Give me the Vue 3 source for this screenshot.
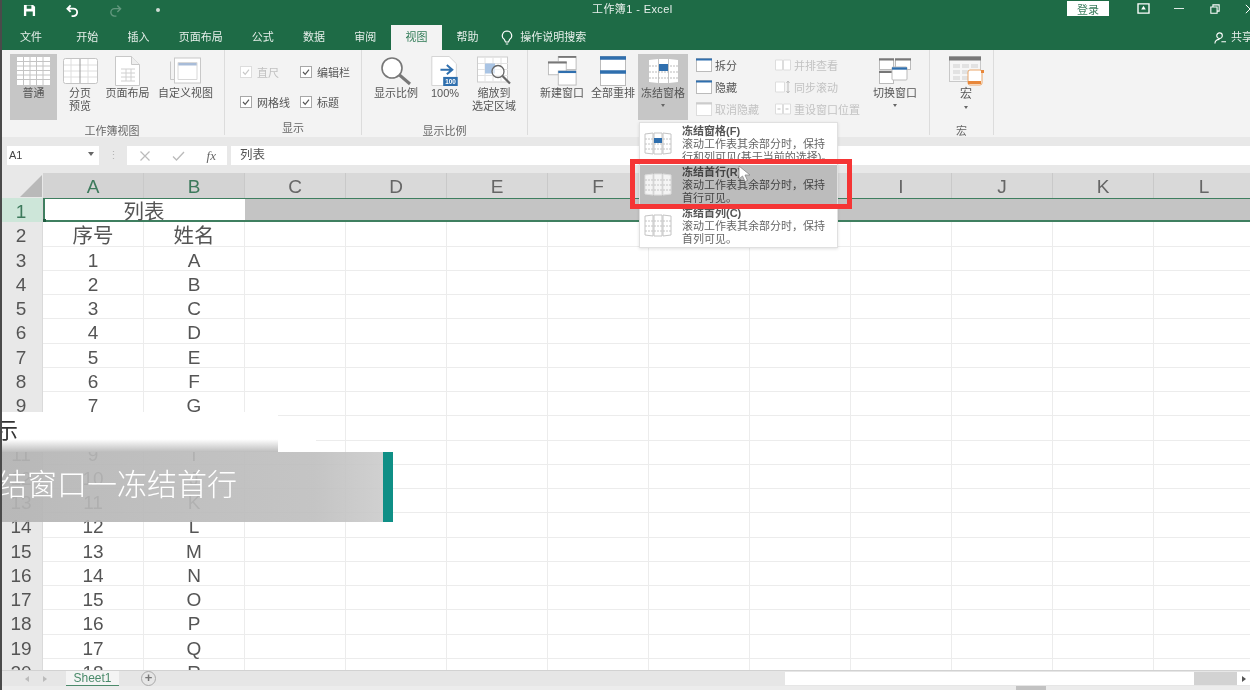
<template>
  <div class="excel">
    <!-- title bar -->
    <header class="titlebar">
      <div class="quick">
        <svg class="q-icon" viewBox="0 0 14 14"><path d="M1 1h10l2 2v10H1z" fill="#fff"/><path d="M4 1.500h5v3.500H4zM3.500 8h7v5h-7z" fill="#1f6c46"/></svg>
        <svg class="q-icon" viewBox="0 0 14 14"><path d="M5 1.500 1.500 5 5 8.500M2 5h6a4 4 0 0 1 0 8H6" fill="none" stroke="#fff" stroke-width="2"/></svg>
        <svg class="q-icon dim" viewBox="0 0 14 14"><path d="M9 1.500 12.500 5 9 8.500M12 5H6a4 4 0 0 0 0 8h2" fill="none" stroke="#fff" stroke-width="1.500"/></svg>
        <span class="q-dot"></span>
      </div>
      <div class="doc-title">工作簿1 - Excel</div>
      <div class="win">
        <button class="login" type="button">登录</button>
        <svg class="w-icon w-ribbon" viewBox="0 0 14 12"><path d="M1 1h12v10H1z" fill="none" stroke="#fff" stroke-width="1.500"/><path d="M7 3 4.500 7h5z" fill="#fff"/></svg>
        <span class="w-min"></span>
        <svg class="w-icon w-restore" viewBox="0 0 12 12"><path d="M1 3.500h7.500V11H1zM3.500 3.500V1H11v7.500H8.500" fill="none" stroke="#fff" stroke-width="1.300"/></svg>
        <svg class="w-icon w-close" viewBox="0 0 12 12"><path d="M1 1l10 10M11 1 1 11" stroke="#fff" stroke-width="1.200"/></svg>
      </div>
    </header>

    <!-- tabs -->
    <nav class="tabs">
      <span v-for="tab in tabs" :key="tab" :class="['tab', { active: tab === '视图' }]">{{ tab }}</span>
      <svg class="bulb" viewBox="0 0 12 15"><path d="M6 1a4.700 4.700 0 0 0-2.600 8.600L4.500 12h3l1.100-2.400A4.700 4.700 0 0 0 6 1zM4.800 14h2.400" fill="none" stroke="#fff" stroke-width="1.200"/></svg>
      <span class="search-hint">操作说明搜索</span>
      <span class="share">
        <svg viewBox="0 0 13 13"><circle cx="6" cy="4" r="3" fill="none" stroke="#fff" stroke-width="1.200"/><path d="M1 12.500c0-3 2-4.500 5-4.500M8 10.500h5" fill="none" stroke="#fff" stroke-width="1.200"/></svg>
        共享
      </span>
    </nav>

    <!-- ribbon -->
    <section class="ribbon">
      <div class="group g-views">
        <div class="group-body">
          <div class="big w47 selected">
            <svg class="ic" width="33" height="28" viewBox="0 0 33 28">
              <rect width="33" height="28" fill="#fff"/>
              <path d="M0 4.500h33M0 9h33M0 13.500h33M0 18h33M0 22.500h33M6.500 0v28M13 0v28M19.500 0v28M26 0v28" stroke="#c4c4c4"/>
            </svg>
            <span>普通</span>
          </div>
          <div class="big w40">
            <svg class="ic" width="35" height="26" viewBox="0 0 35 26">
              <rect x=".5" y=".5" width="34" height="25" rx="2" fill="#fff" stroke="#c4c4c4"/>
              <path d="M1 7h33M1 13h33M1 19h33M8 1v24M25 1v24" stroke="#dedede"/>
              <path d="M17 1v24" stroke="#9a9a9a"/>
            </svg>
            <span>分页<br />预览</span>
          </div>
          <div class="big w49">
            <svg class="ic" width="25" height="30" viewBox="0 0 25 30">
              <path d="M.5.500h16l8 8v21H.500z" fill="#fff" stroke="#c8c8c8"/>
              <path d="M16.500.5v8h8" fill="#eee" stroke="#c8c8c8"/>
              <path d="M6 13h14M6 17h14M6 21h14M6 25h14M11 13v12M16 13v12" stroke="#d0d0d0"/>
            </svg>
            <span>页面布局</span>
          </div>
          <div class="big w61">
            <svg class="ic" width="31" height="27" viewBox="0 0 31 27">
              <path d="M.5 4v18h4" fill="none" stroke="#c8c8c8"/>
              <rect x="4.500" y=".5" width="26" height="25" fill="#fff" stroke="#c8c8c8"/>
              <path d="M8 5h19v3H8z" fill="#a8bcd8"/>
              <path d="M8 5h19v17H8z" fill="none" stroke="#d8d8d8"/>
            </svg>
            <span>自定义视图</span>
          </div>
        </div>
        <div class="group-label">工作簿视图</div>
      </div>

      <div class="group g-show">
        <div class="group-body checks">
          <label v-for="c in checks" :key="c.text" :class="['check', { off: c.off }]">
            <svg width="12" height="12" viewBox="0 0 12 12">
              <rect x=".5" y=".5" width="11" height="11" fill="#fff" :stroke="c.off ? '#ddd' : '#a8a8a8'"/>
              <path d="M3 6l2.200 2.300L9 3.700" fill="none" :stroke="c.off ? '#c8c8c8' : '#555'" stroke-width="1.200"/>
            </svg>
            {{ c.text }}
          </label>
        </div>
        <div class="group-label">显示</div>
      </div>

      <div class="group g-zoom">
        <div class="group-body">
          <div class="big w46">
            <svg class="ic" width="32" height="30" viewBox="0 0 32 30">
              <circle cx="12" cy="12" r="10" fill="#fff" stroke="#777" stroke-width="1.600"/>
              <path d="M19.500 19 30 28" stroke="#777" stroke-width="3"/>
            </svg>
            <span>显示比例</span>
          </div>
          <div class="big w32 ml10">
            <svg class="ic" width="30" height="33" viewBox="0 0 30 33">
              <path d="M.5.500h19l8 8v24H.500z" fill="#fff" stroke="#cfcfcf"/>
              <path d="M10 15h12M17 10l6 5-6 5" fill="none" stroke="#2f6fae" stroke-width="2.200"/>
              <rect x="13" y="23" width="16" height="10" fill="#2f6fae"/>
              <text x="21" y="31" class="hundred">100</text>
            </svg>
            <span>100%</span>
          </div>
          <div class="big w54 ml6">
            <svg class="ic" width="34" height="29" viewBox="0 0 34 29">
              <rect x=".5" y=".5" width="30" height="25" fill="#fff" stroke="#cdcdcd"/>
              <path d="M1 7h30M1 13h30M1 19h30M8 1v24M16 1v24M24 1v24" stroke="#e2e2e2"/>
              <rect x="8" y="7" width="10" height="10" fill="#a9c4e4"/>
              <circle cx="21" cy="15" r="6" fill="#fff" fill-opacity=".6" stroke="#666" stroke-width="1.300"/>
              <path d="M25.500 19.500 33 27" stroke="#666" stroke-width="2.200"/>
            </svg>
            <span>缩放到<br />选定区域</span>
          </div>
        </div>
        <div class="group-label">显示比例</div>
      </div>

      <div class="group g-window">
        <div class="group-body">
          <div class="big w48">
            <svg class="ic" width="31" height="32" viewBox="0 0 31 32">
              <rect x="11" y=".5" width="19" height="14" fill="#fff" stroke="#bbb"/>
              <path d="M11 1h19" stroke="#777" stroke-width="2"/>
              <rect x=".5" y="6" width="19" height="14" fill="#fff" stroke="#bbb"/>
              <path d="M0 7h20" stroke="#777" stroke-width="2"/>
              <rect x="11" y="16" width="19" height="15" fill="#fff" stroke="#bbb"/>
              <path d="M11 17h19" stroke="#2f6fae" stroke-width="2.400"/>
            </svg>
            <span>新建窗口</span>
          </div>
          <div class="big w48 ml3">
            <svg class="ic" width="26" height="30" viewBox="0 0 26 30">
              <rect x=".5" y=".5" width="25" height="29" fill="#fff" stroke="#bbb"/>
              <path d="M0 2h26M0 16h26" stroke="#2f6fae" stroke-width="3.400"/>
            </svg>
            <span>全部重排</span>
          </div>
          <div class="big w50 ml1 selected">
            <svg class="ic" width="31" height="26" viewBox="0 0 31 26">
              <path d="M1 2l9-1 0 24-9-1zM11 1h9v24h-9zM21 1l9 1v22l-9 1z" fill="#fff"/>
              <path d="M1 8h29M1 14h29M1 20h29" stroke="#bbb" stroke-dasharray="2 1"/>
              <rect x="11" y="6" width="9" height="7" fill="#2f6fae"/>
            </svg>
            <span>冻结窗格</span>
            <i class="caret"></i>
          </div>
          <div class="small-col ml8 w78">
            <div class="small">
              <svg width="16" height="14" viewBox="0 0 16 14"><rect x=".5" y=".5" width="15" height="13" fill="#fff" stroke="#bbb"/><path d="M0 1.500h16" stroke="#2f6fae" stroke-width="2"/></svg>
              拆分
            </div>
            <div class="small">
              <svg width="16" height="14" viewBox="0 0 16 14"><rect x=".5" y=".5" width="15" height="13" fill="#fff" stroke="#bbb"/><path d="M0 1.500h16" stroke="#2f6fae" stroke-width="2"/></svg>
              隐藏
            </div>
            <div class="small off">
              <svg width="16" height="14" viewBox="0 0 16 14"><rect x=".5" y=".5" width="15" height="13" fill="#fff" stroke="#ddd"/><path d="M0 1.500h16" stroke="#ccc" stroke-width="2"/></svg>
              取消隐藏
            </div>
          </div>
          <div class="small-col ml1 w94">
            <div class="small off">
              <svg width="16" height="14" viewBox="0 0 16 14"><path d="M.5 2h7v10h-7zM8.500 2h7v10h-7z" fill="#fff" stroke="#ddd"/></svg>
              并排查看
            </div>
            <div class="small off">
              <svg width="16" height="14" viewBox="0 0 16 14"><path d="M.5 2h9v10h-9z" fill="#fff" stroke="#ddd"/><path d="M13 1v12M11.500 3 13 1l1.500 2M11.500 11l1.500 2 1.500-2" fill="none" stroke="#bbb"/></svg>
              同步滚动
            </div>
            <div class="small off">
              <svg width="16" height="14" viewBox="0 0 16 14"><path d="M.5 2h7v10h-7zM8.500 2h7v10h-7z" fill="#fff" stroke="#ddd"/><path d="M2.500 7h3M10.500 7h3" stroke="#bbb"/></svg>
              重设窗口位置
            </div>
          </div>
          <div class="big w48 ml2">
            <svg class="ic" width="32" height="26" viewBox="0 0 32 26">
              <rect x=".5" y=".5" width="14" height="11" fill="#fff" stroke="#bbb"/>
              <rect x="16.500" y=".5" width="15" height="11" fill="#fff" stroke="#bbb"/>
              <path d="M0 1.500h15M16 1.500h16" stroke="#777" stroke-width="2"/>
              <rect x=".5" y="13" width="14" height="12.500" fill="#fff" stroke="#bbb"/>
              <path d="M0 14h15" stroke="#777" stroke-width="2"/>
              <rect x="13" y="9" width="15" height="13" rx="1" fill="#fff" stroke="#bbb"/>
              <path d="M13 10.500h15" stroke="#2f6fae" stroke-width="2.400"/>
            </svg>
            <span>切换窗口</span>
            <i class="caret"></i>
          </div>
        </div>
        <div class="group-label">&nbsp;</div>
      </div>

      <div class="group g-macro">
        <div class="group-body">
          <div class="big w40 ml11">
            <svg class="ic" width="35" height="30" viewBox="0 0 35 30">
              <rect x=".5" y=".5" width="31" height="25" fill="#f6f6f6" stroke="#c8c8c8"/>
              <path d="M0 2.500h32" stroke="#777" stroke-width="4"/>
              <path d="M4 8h7v4H4zM13 8h7v4h-7zM22 8h7v4h-7zM4 14h7v4H4zM13 14h7v4h-7zM4 20h7v4H4zM13 20h7v4h-7z" fill="#e2e2e2"/>
              <rect x="19" y="14" width="14" height="15" rx="2" fill="#fff" stroke="#e9a66b"/>
              <path d="M19 26.500h13" stroke="#e8873a" stroke-width="3"/>
              <rect x="32" y="14" width="3" height="3" fill="#e8873a"/>
            </svg>
            <span class="macro-name">宏</span>
            <i class="caret"></i>
          </div>
        </div>
        <div class="group-label">宏</div>
      </div>
    </section>

    <!-- formula bar -->
    <div class="formula-bar">
      <div class="name-box">A1<i class="caret dark"></i></div>
      <span class="grip">⋮</span>
      <div class="fx-box">
        <svg width="12" height="12" viewBox="0 0 12 12"><path d="M1.500 1.500l9 9M10.500 1.500l-9 9" stroke="#bbb" stroke-width="1.200"/></svg>
        <svg width="13" height="12" viewBox="0 0 13 12"><path d="M1 6.500 4.500 10 12 2" fill="none" stroke="#bbb" stroke-width="1.300"/></svg>
        <i class="fx">fx</i>
      </div>
      <div class="formula">列表</div>
    </div>

    <!-- sheet -->
    <div class="sheet">
      <div class="row head">
        <div class="corner"><i></i></div>
        <div v-for="col in columns" :key="col" :class="['col-head', { on: col === 'A' || col === 'B' }]">{{ col }}</div>
      </div>
      <div class="row selected-row">
        <div class="row-head on">1</div>
        <div class="merged">列表<i class="handle"></i></div>
        <div v-for="col in columns.slice(2)" :key="col" class="cell dark"></div>
      </div>
      <div class="row">
        <div class="row-head">2</div>
        <div class="cell cjk">序号</div>
        <div class="cell cjk">姓名</div>
        <div v-for="col in columns.slice(2)" :key="col" class="cell"></div>
      </div>
      <div v-for="item in rows" :key="item.no" class="row">
        <div class="row-head">{{ item.no + 2 }}</div>
        <div class="cell">{{ item.no }}</div>
        <div class="cell">{{ item.name }}</div>
        <div v-for="col in columns.slice(2)" :key="col" class="cell"></div>
      </div>
    </div>

    <!-- sheet tabs + scrollbar -->
    <footer class="sheet-bar">
      <span class="nav-arrows">
        <i class="tri left"></i>
        <i class="tri right"></i>
      </span>
      <span class="sheet-tab">Sheet1</span>
      <span class="add-sheet">+</span>
      <div class="hscroll">
        <div class="track"></div>
        <div class="thumb"></div>
        <div class="end"><i class="tri right dark"></i></div>
      </div>
    </footer>
    <div class="progress"><i></i></div>

    <!-- freeze menu -->
    <div class="menu">
      <div v-for="(m, i) in menu" :key="m.title" :class="['menu-item', { hover: i === 1 }]">
        <svg width="28" height="26" viewBox="0 0 28 26">
          <path d="M1 3l8-1v21l-8-1zM10 2h8v21h-8zM19 2l8 1v19l-8 1z" :fill="i === 1 ? '#f4f4f4' : '#fff'" :stroke="i === 1 ? '#ddd' : '#c4c4c4'"/>
          <path d="M1 8h26M1 13h26M1 18h26" stroke="#c4c4c4" stroke-dasharray="2 1"/>
          <rect v-if="i === 0" x="10" y="7" width="8" height="5" fill="#2f6fae"/>
        </svg>
        <div class="menu-text">
          <strong>{{ m.title }}</strong>
          <p>{{ m.desc }}</p>
        </div>
      </div>
    </div>
    <div class="red-box"></div>
    <svg class="cursor" width="14" height="18" viewBox="0 0 14 18"><path d="M1 1v13l3.500-3 2.500 5.500 2.500-1L7 10h5z" fill="#fff" stroke="#888" stroke-width=".8"/></svg>

    <!-- video caption -->
    <div class="caption">
      <div class="cap-top"><span>示</span></div>
      <div class="cap-band">
        <span>结窗口一冻结首行</span>
        <i></i>
      </div>
      <div class="cap-blob"></div>
    </div>
    <div class="left-edge"></div>
  </div>
</template>

<script setup>
const tabs = ['文件', '开始', '插入', '页面布局', '公式', '数据', '审阅', '视图', '帮助']
const columns = ['A', 'B', 'C', 'D', 'E', 'F', 'G', 'H', 'I', 'J', 'K', 'L']

const checks = [
  { text: '直尺', off: true },
  { text: '编辑栏' },
  { text: '网格线' },
  { text: '标题' },
]

const rows = 'ABCDEFGHIJKLMNOPQR'.split('').map((name, i) => ({ no: i + 1, name }))

const scrollText = '滚动工作表其余部分时，保持'
const menu = [
  { title: '冻结窗格(F)', desc: scrollText + '行和列可见(基于当前的选择)。' },
  { title: '冻结首行(R)', desc: scrollText + '首行可见。' },
  { title: '冻结首列(C)', desc: scrollText + '首列可见。' },
]
</script>

<style>
html,
body {
  margin: 0;
  background: #fff;
}
</style>

<style scoped>
.excel {
  position: relative;
  width: 1250px;
  height: 690px;
  overflow: hidden;
  display: flex;
  flex-direction: column;
  font-family: "Liberation Sans", "Noto Sans CJK SC", sans-serif;
  font-size: 11px;
  color: #555;
  background: #fff;
  filter: blur(0.55px);
}

/* title bar */
.titlebar {
  height: 25px;
  flex-shrink: 0;
  display: flex;
  align-items: center;
  background: #1e6b46;
  color: #e8f0ec;
  position: relative;
}

.quick {
  display: flex;
  align-items: center;
  margin-top: -5px;
  padding-left: 23px;
  gap: 30px;
}

.q-icon {
  width: 13px;
  height: 13px;
}

.q-icon.dim {
  opacity: 0.3;
}

.q-dot {
  width: 4px;
  height: 4px;
  margin-left: 4px;
  border-radius: 50%;
  background: #cfdcd5;
}

.doc-title {
  position: absolute;
  left: 592px;
  top: 2px;
  font-size: 11px;
  letter-spacing: 0.4px;
  line-height: 14px;
}

.win {
  margin-left: auto;
  display: flex;
  align-items: center;
  height: 100%;
}

.login {
  width: 42px;
  height: 15px;
  margin: -8px 28px 0 0;
  padding: 0;
  border: 0;
  background: #fff;
  color: #3b7d5e;
  font: 11px "Liberation Sans", "Noto Sans CJK SC", sans-serif;
}

.w-icon {
  display: block;
  margin-top: -8px;
}

.w-ribbon {
  width: 13px;
  height: 11px;
  margin-right: 24px;
}

.w-min {
  width: 10px;
  height: 1px;
  margin: -8px 26px 0 0;
  background: #dfe9e4;
}

.w-restore {
  width: 10px;
  height: 10px;
  margin-right: 25px;
}

.w-close {
  width: 10px;
  height: 10px;
  margin-right: -5px;
}

/* tabs */
.tabs {
  height: 25px;
  flex-shrink: 0;
  display: flex;
  align-items: center;
  padding-left: 5.500px;
  background: #1e6b46;
  color: #e6efea;
}

.tab {
  height: 100%;
  padding: 0 14.6px;
  line-height: 25px;
  font-size: 11px;
}

.tab:first-child {
  margin-right: 5px;
}

.tab.active {
  background: #f3f3f3;
  color: #2f7a55;
}

.bulb {
  width: 12px;
  height: 15px;
  margin-left: 8px;
}

.search-hint {
  margin-left: 7px;
  line-height: 25px;
}

.share {
  margin-left: auto;
  margin-right: -3px;
  display: flex;
  align-items: center;
  gap: 5px;
  line-height: 25px;
}

.share svg {
  width: 12px;
  height: 12px;
}

/* ribbon */
.ribbon {
  height: 87px;
  flex-shrink: 0;
  display: flex;
  background: #f3f3f3;
}

.group {
  flex-shrink: 0;
  display: flex;
  flex-direction: column;
  padding-top: 4px;
  box-sizing: border-box;
  border-right: 1px solid #dcdcdc;
  height: 85px;
}

.g-views {
  width: 225px;
  padding-left: 10px;
}

.g-show {
  width: 137px;
}

.g-zoom {
  width: 166px;
  padding-left: 11px;
}

.g-window {
  width: 402px;
  padding-left: 10px;
}

.g-macro {
  width: 64px;
  padding-left: 5px;
}

.group-body {
  display: flex;
  height: 66px;
  gap: 3px;
}

.g-zoom .group-body,
.g-window .group-body,
.g-macro .group-body {
  gap: 0;
}

.group-label {
  margin-top: 4px;
  line-height: 14px;
  text-align: center;
  font-size: 11px;
  color: #666;
}

.g-views .group-label {
  margin-left: -10px;
}

.g-zoom .group-label {
  margin-left: -11px;
}

.g-macro .group-label {
  margin-left: -5px;
}

.big {
  flex-shrink: 0;
  display: flex;
  flex-direction: column;
  align-items: center;
  text-align: center;
  line-height: 13px;
  font-size: 11px;
  color: #555;
  height: 66px;
}

.big.selected {
  background: #c6c6c6;
}

.ic {
  display: block;
  flex-shrink: 0;
  margin-top: 2px;
  height: 30px;
  margin-bottom: 1px;
}

.macro-name {
  font-size: 12px;
  line-height: 15px;
}

.w32 {
  width: 32px;
}

.w40 {
  width: 40px;
}

.w46 {
  width: 46px;
}

.w47 {
  width: 47px;
}

.w48 {
  width: 48px;
}

.w49 {
  width: 49px;
}

.w50 {
  width: 50px;
}

.w54 {
  width: 54px;
}

.w61 {
  width: 61px;
}

.w78 {
  width: 78px;
}

.w94 {
  width: 94px;
}

.ml1 {
  margin-left: 1px;
}

.ml2 {
  margin-left: 2px;
}

.ml3 {
  margin-left: 3px;
}

.ml6 {
  margin-left: 6px;
}

.ml8 {
  margin-left: 8px;
}

.ml10 {
  margin-left: 10px;
}

.ml11 {
  margin-left: 11px;
}

.caret {
  display: block;
  width: 0;
  height: 0;
  margin-top: 4px;
  border-left: 2.500px solid transparent;
  border-right: 2.500px solid transparent;
  border-top: 3px solid #666;
}

.caret.dark {
  position: absolute;
  right: 5px;
  top: 6px;
  margin: 0;
  border-left-width: 3.500px;
  border-right-width: 3.500px;
  border-top-width: 4px;
}

.checks {
  display: grid;
  grid-template-columns: 60px 60px;
  grid-auto-rows: 30px;
  gap: 0;
  padding: 3px 0 0 15px;
  box-sizing: border-box;
}

.check {
  display: flex;
  align-items: center;
  gap: 5px;
  color: #555;
  font-size: 11px;
}

.check.off {
  color: #c0c0c0;
}

.small-col {
  flex-shrink: 0;
  display: flex;
  flex-direction: column;
}

.small {
  height: 22.500px;
  display: flex;
  align-items: center;
  gap: 3px;
  white-space: nowrap;
  font-size: 11px;
  color: #555;
}

.small.off {
  color: #c2c2c2;
}

.hundred {
  font: bold 7px "Liberation Sans", sans-serif;
  fill: #fff;
  text-anchor: middle;
}

/* formula bar */
.formula-bar {
  height: 36px;
  flex-shrink: 0;
  box-sizing: border-box;
  padding: 9px 0 8px 7px;
  display: flex;
  background: #e8e8e8;
}

.name-box {
  position: relative;
  width: 92px;
  box-sizing: border-box;
  padding-left: 2px;
  background: #fff;
  line-height: 19px;
  font-size: 11px;
  color: #444;
}

.grip {
  width: 28px;
  text-align: center;
  line-height: 18px;
  color: #b5b5b5;
}

.fx-box {
  width: 100px;
  box-sizing: border-box;
  padding: 0 11px 0 12px;
  display: flex;
  align-items: center;
  justify-content: space-between;
  background: #fff;
}

.fx {
  font: italic 13px "Liberation Serif", serif;
  color: #666;
}

.formula {
  flex: 1;
  margin-left: 4px;
  padding-left: 9px;
  background: #fff;
  line-height: 19px;
  font-size: 12.5px;
  color: #555;
}

/* sheet */
.sheet {
  flex: 1;
  min-height: 0;
  overflow: hidden;
  background: #fff;
}

.row {
  display: grid;
  grid-template-columns: 43px repeat(12, 101px);
  grid-template-rows: 100%;
  height: 24.250px;
  font-size: 19px;
  line-height: 27px;
  color: #555;
}

.row.head {
  height: 25px;
}

.corner {
  position: relative;
  background: #e8e8e8;
}

.corner i {
  position: absolute;
  right: 1px;
  bottom: 1px;
  border-left: 22px solid transparent;
  border-bottom: 22px solid #b9b9b9;
}

.col-head {
  background: #d9d9d9;
  border-right: 1px solid #c9c9c9;
  text-align: center;
  color: #666;
}

.col-head.on {
  background: #d3d3d3;
  color: #3d7a5c;
}

.row-head {
  background: #e8e8e8;
  text-align: center;
  border-right: 1px solid #dadada;
}

.row-head.on {
  background: #cde6d9;
  color: #3d7a5c;
}

.cell {
  box-sizing: border-box;
  border-right: 1px solid #ececec;
  border-bottom: 1px solid #ececec;
  text-align: center;
}

.cell.cjk {
  font-size: 20.500px;
}

.selected-row .cell.dark {
  background: #c4c4c4;
  border-top: 1px solid #3f7f60;
  border-bottom: 2px solid #3f7f60;
  border-right: 0;
}

.merged {
  position: relative;
  grid-column: span 2;
  box-sizing: border-box;
  background: #fff;
  border: 1px solid #3f7f60;
  border-left-width: 2px;
  border-bottom-width: 2px;
  border-right: 0;
  text-align: center;
  font-size: 20.500px;
  line-height: 25px;
  padding-right: 2px;
}

.handle {
  position: absolute;
  left: -2px;
  bottom: -2px;
  width: 3px;
  height: 3px;
  background: #1f5c40;
}

/* sheet tabs */
.sheet-bar {
  height: 16px;
  flex-shrink: 0;
  display: flex;
  align-items: center;
  background: #e6e6e6;
  border-top: 1px solid #d2d2d2;
  box-sizing: border-box;
}

.nav-arrows {
  width: 66px;
  display: flex;
  justify-content: center;
  gap: 14px;
  padding-left: 6px;
  box-sizing: border-box;
}

.tri {
  display: block;
  width: 0;
  height: 0;
  border-top: 3px solid transparent;
  border-bottom: 3px solid transparent;
}

.tri.left {
  border-right: 4px solid #bbb;
}

.tri.right {
  border-left: 4px solid #bbb;
}

.tri.right.dark {
  border-left-color: #555;
}

.sheet-tab {
  width: 53px;
  height: 16px;
  margin-top: 1px;
  box-sizing: border-box;
  border-bottom: 2px solid #4c8a6b;
  background: #f4f4f4;
  color: #4a8a6a;
  text-align: center;
  line-height: 14px;
  font-size: 12px;
}

.add-sheet {
  width: 15px;
  height: 15px;
  margin-left: 22px;
  box-sizing: border-box;
  border: 1px solid #aaa;
  border-radius: 50%;
  text-align: center;
  line-height: 12px;
  font-size: 13px;
  font-weight: 700;
  color: #777;
}

.hscroll {
  margin-left: auto;
  width: 465px;
  height: 13px;
  display: flex;
}

.track {
  flex: 1;
  background: #fff;
}

.thumb {
  width: 43px;
  background: #d2d2d2;
}

.end {
  width: 13px;
  display: flex;
  align-items: center;
  justify-content: center;
  background: #fff;
}

.progress {
  height: 4px;
  flex-shrink: 0;
  background: #ececec;
}

.progress i {
  display: block;
  width: 30px;
  height: 100%;
  margin-left: 1016px;
  background: #c2c2c2;
}

/* menu */
.menu {
  position: absolute;
  left: 639px;
  top: 122px;
  width: 199px;
  box-sizing: border-box;
  padding-top: 1px;
  background: #fff;
  border: 1px solid #e0e0e0;
  box-shadow: 0 1px 3px rgba(0, 0, 0, 0.12);
}

.menu-item {
  height: 41px;
  display: flex;
  gap: 10px;
  padding-left: 4px;
  box-sizing: border-box;
  overflow: hidden;
}

.menu-item svg {
  flex-shrink: 0;
  margin-top: 7px;
}

.menu-item.hover {
  background: #bcbcbc;
}

.menu-text {
  width: 152px;
  padding-top: 1px;
  line-height: 13px;
  font-size: 11px;
  color: #666;
}

.menu-text strong {
  display: block;
  color: #555;
  font-weight: 700;
}

.menu-text p {
  margin: 0;
}

.menu-item.hover .menu-text,
.menu-item.hover strong {
  color: #444;
}

.red-box {
  position: absolute;
  left: 630px;
  top: 159px;
  width: 222px;
  height: 50px;
  box-sizing: border-box;
  border: 5px solid #f53535;
}

.cursor {
  position: absolute;
  left: 738px;
  top: 165px;
}

/* caption */
.caption {
  position: absolute;
  left: 0;
  top: 412px;
  width: 393px;
  height: 110px;
}

.cap-top {
  width: 278px;
  height: 40px;
  background: linear-gradient(#fff 68%, #bdbdbd 100%);
  overflow: hidden;
}

.cap-top span {
  display: block;
  margin: 6px 0 0 -4px;
  font-size: 22px;
  line-height: 26px;
  color: #333;
}

.cap-band {
  position: relative;
  height: 70px;
  background: linear-gradient(90deg, rgba(180, 180, 180, 0.92), rgba(190, 190, 190, 0.9) 80%, rgba(205, 205, 205, 0.9));
  overflow: hidden;
}

.cap-band span {
  position: absolute;
  left: -3px;
  top: 12px;
  font-size: 30px;
  line-height: 42px;
  font-weight: 300;
  color: #fff;
  white-space: nowrap;
}

.cap-band i {
  position: absolute;
  right: 0;
  top: 0;
  width: 10px;
  height: 100%;
  background: #0f8f86;
}

.cap-blob {
  position: absolute;
  left: 278px;
  top: 28px;
  width: 38px;
  height: 12px;
  background: #fff;
}

.left-edge {
  position: absolute;
  left: 0;
  top: 0;
  width: 2px;
  height: 100%;
  background: #4a4a4a;
}
</style>
